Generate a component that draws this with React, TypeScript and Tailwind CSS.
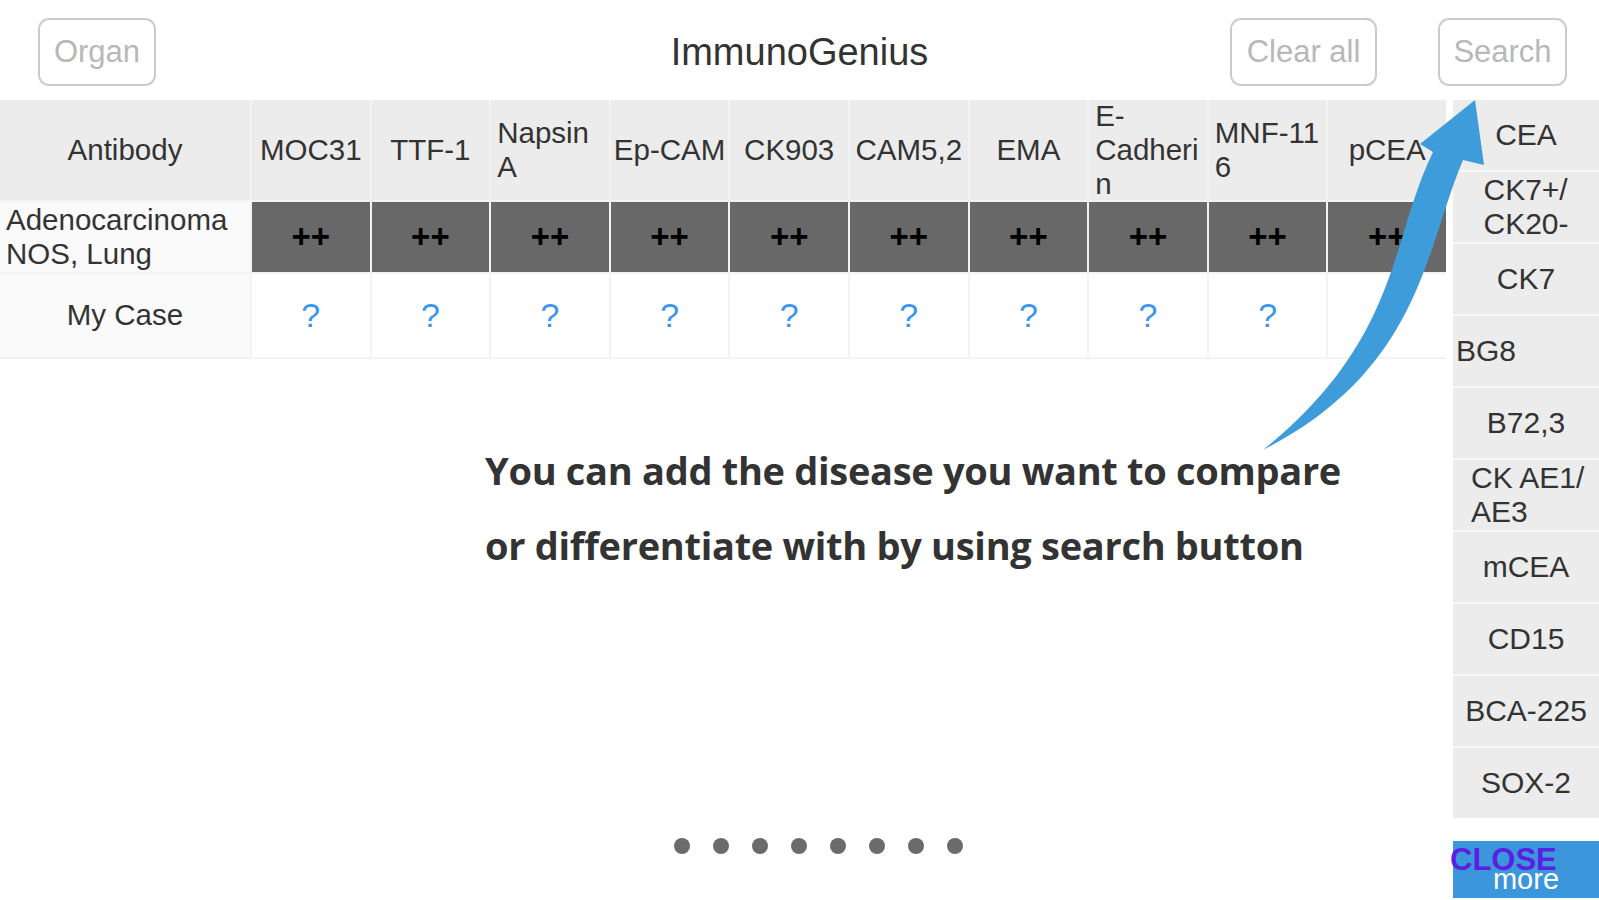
import React from "react";

const antibodies: { label: string[]; wrap?: boolean }[] = [
  { label: ["MOC31"] },
  { label: ["TTF-1"] },
  { label: ["Napsin", "A"], wrap: true },
  { label: ["Ep-CAM"] },
  { label: ["CK903"] },
  { label: ["CAM5,2"] },
  { label: ["EMA"] },
  { label: ["E-", "Cadheri", "n"], wrap: true },
  { label: ["MNF-11", "6"], wrap: true },
  { label: ["pCEA"] },
];

const sideItems: { label: string[]; align: "center" | "left" | "edge" }[] = [
  { label: ["CEA"], align: "center" },
  { label: ["CK7+/", "CK20-"], align: "center" },
  { label: ["CK7"], align: "center" },
  { label: ["BG8"], align: "edge" },
  { label: ["B72,3"], align: "center" },
  { label: ["CK AE1/", "AE3"], align: "left" },
  { label: ["mCEA"], align: "center" },
  { label: ["CD15"], align: "center" },
  { label: ["BCA-225"], align: "center" },
  { label: ["SOX-2"], align: "center" },
];

function OutlineButton({ children, className }: { children: React.ReactNode; className?: string }) {
  return (
    <button
      type="button"
      className={`h-[68px] rounded-[11px] border-2 border-[#cbcbcb] bg-white text-[31px] text-[#b8b8b8] ${className ?? ""}`}
    >
      {children}
    </button>
  );
}

function CurvedArrow() {
  return (
    <svg
      className="pointer-events-none absolute left-0 top-0"
      width="1599"
      height="900"
      viewBox="0 0 1599 900"
    >
      <path
        d="M1263,450 C1400,340 1390,240 1433,152 L1420,144 L1475,100 L1484,165 L1463,160 C1425,250 1420,370 1263,450 Z"
        fill="#3f9cdb"
      />
    </svg>
  );
}

export default function App() {
  return (
    <div
      className="relative h-[900px] w-[1599px] overflow-hidden bg-white text-[#333]"
      style={{ fontFamily: '"Liberation Sans", Arial, sans-serif' }}
    >
      {/* Top bar */}
      <div className="grid h-[100px] grid-cols-[1fr_auto_1fr] items-start pt-[18px]">
        <div className="pl-[38px]">
          <OutlineButton className="w-[118px]">Organ</OutlineButton>
        </div>
        <div className="flex h-[68px] items-center text-[38px] text-[#333]">ImmunoGenius</div>
        <div className="flex justify-end gap-[61px] pr-[32px]">
          <OutlineButton className="w-[147px]">Clear all</OutlineButton>
          <OutlineButton className="w-[129px]">Search</OutlineButton>
        </div>
      </div>

      <div className="flex h-[800px]">
        {/* Left: table + hint */}
        <div className="flex w-[1453px] flex-none flex-col">
          <div className="grid w-[1446px] grid-cols-[250px_repeat(10,minmax(0,1fr))] grid-rows-[100px_70px_83px] gap-[2px] bg-[#f3f3f3] pb-[2px] text-[29.5px]">
            <div className="flex items-center justify-center bg-[#ececec]">Antibody</div>
            {antibodies.map((a, i) => (
              <div
                key={i}
                className={`flex items-center overflow-hidden whitespace-nowrap bg-[#ececec] leading-[34px] ${a.wrap ? "justify-start pl-[6px]" : "justify-center"}`}
              >
                <div className="flex flex-col">
                  {a.label.map((l, j) => (
                    <span key={j}>{l}</span>
                  ))}
                </div>
              </div>
            ))}

            <div className="flex flex-col justify-center bg-[#fafafa] pl-[6px] leading-[34px]">
              <span>Adenocarcinoma</span>
              <span>NOS, Lung</span>
            </div>
            {antibodies.map((_, i) => (
              <div key={i} className="flex items-center justify-center bg-[#686868] text-[33px] font-bold text-black">
                ++
              </div>
            ))}

            <div className="flex items-center justify-center bg-[#fafafa]">My Case</div>
            {antibodies.map((_, i) => (
              <div key={i} className="flex items-center justify-center bg-white text-[34px] text-[#3d96ee]">
                ?
              </div>
            ))}
          </div>

          <div
            className="mt-[74px] pl-[485px] text-[38px] font-bold leading-[75px] tracking-[-0.008em] text-[#333]"
            style={{ fontFamily: '"Open Sans", sans-serif' }}
          >
            <p>You can add the disease you want to compare</p>
            <p>or differentiate with by using search button</p>
          </div>

          <div className="mt-auto mb-[46px] flex gap-[23px] pl-[674px]">
            {Array.from({ length: 8 }).map((_, i) => (
              <span key={i} className="h-[16px] w-[16px] rounded-full bg-[#6b6b6b]" />
            ))}
          </div>
        </div>

        {/* Right: antibody list */}
        <div className="flex w-[146px] flex-none flex-col">
          <div className="flex flex-col gap-[2px] bg-[#f8f8f8]">
            {sideItems.map((s, i) => (
              <div
                key={i}
                className={`flex h-[70px] items-center whitespace-nowrap bg-[#ececec] text-[30px] leading-[34px] ${
                  s.align === "center" ? "justify-center" : s.align === "left" ? "justify-start pl-[18px]" : "justify-start pl-[3px]"
                }`}
              >
                <div className="flex flex-col">
                  {s.label.map((l, j) => (
                    <span key={j}>{l}</span>
                  ))}
                </div>
              </div>
            ))}
          </div>
          <div className="relative mt-[23px] flex h-[57px] items-end justify-center bg-[#3b96dc] pb-[4px]">
            <span className="text-[29px] leading-[29px] text-white">more</span>
            <span className="absolute left-[-3px] top-[3px] text-[31px] font-bold leading-[31px] text-[#5a1fe0]">
              CLOSE
            </span>
          </div>
        </div>
      </div>

      <CurvedArrow />
    </div>
  );
}
